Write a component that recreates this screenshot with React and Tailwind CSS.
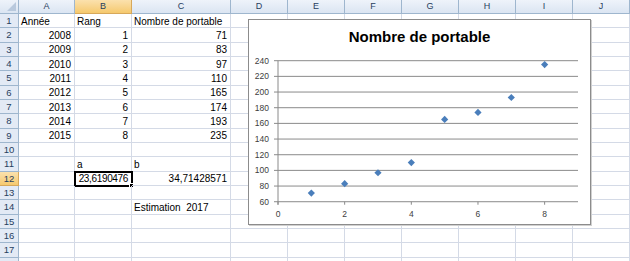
import React from "react";

const COLS = [
  { key: "A", w: "w-[56px]" },
  { key: "B", w: "w-[57px]" },
  { key: "C", w: "w-[99px]" },
  { key: "D", w: "w-[57px]" },
  { key: "E", w: "w-[57px]" },
  { key: "F", w: "w-[57px]" },
  { key: "G", w: "w-[57px]" },
  { key: "H", w: "w-[57px]" },
  { key: "I", w: "w-[57px]" },
  { key: "J", w: "w-[57px]" },
];

const cells = {
  "1A": ["Année", "l"],
  "1B": ["Rang", "l"],
  "1C": ["Nombre de portable", "l"],
  "11B": ["a", "l"],
  "11C": ["b", "l"],
  "12B": ["23,6190476", "r"],
  "12C": ["34,71428571", "r"],
  "14C": ["Estimation  2017", "l"],
};
const data = [
  [2008, 1, 71],
  [2009, 2, 83],
  [2010, 3, 97],
  [2011, 4, 110],
  [2012, 5, 165],
  [2013, 6, 174],
  [2014, 7, 193],
  [2015, 8, 235],
];
data.forEach((d, i) => {
  const r = i + 2;
  cells[r + "A"] = [String(d[0]), "r"];
  cells[r + "B"] = [String(d[1]), "r"];
  cells[r + "C"] = [String(d[2]), "r"];
});

const font = { fontFamily: '"Liberation Sans", Arial, sans-serif' };

function Chart() {
  const x0 = 29;
  const ux = 33.33;
  const yTop = 14.7;
  const step = 15.67;
  const yVal = (v) => yTop + ((240 - v) / 20) * step;
  const grid = [];
  for (let k = 0; k <= 9; k++) grid.push(240 - k * 20);
  const pts = [71, 83, 97, 110, 165, 174, 193, 235];
  return (
    <div className="absolute left-[248px] top-[19px] w-[343px] h-[206px] flex flex-col bg-white border border-[#8c8c8c] shadow-[1px_1px_0_#d0d0d0]">
      <div className="pt-[8px] h-[26px] text-center text-[15px] font-bold text-black leading-[18px]" style={font}>
        Nombre de portable
      </div>
      <svg width="341" height="178" style={font}>
        {grid.map((v) => {
          const y = yVal(v);
          return (
            <g key={v}>
              <line x1={x0 - 4} x2={329} y1={y} y2={y} stroke="#8a8a8a" strokeWidth="1" />
              <text x={20} y={y + 3} fontSize="8.5" fill="#404040" textAnchor="end">
                {v}
              </text>
            </g>
          );
        })}
        <line x1={x0} x2={x0} y1={yTop} y2={yVal(60) + 3} stroke="#8a8a8a" strokeWidth="1" />
        {[0, 2, 4, 6, 8].map((v) => (
          <g key={v}>
            <line x1={x0 + v * ux} x2={x0 + v * ux} y1={yVal(60)} y2={yVal(60) + 3} stroke="#8a8a8a" strokeWidth="1" />
            <text x={x0 + v * ux} y={171} fontSize="8.5" fill="#404040" textAnchor="middle">
              {v}
            </text>
          </g>
        ))}
        {pts.map((v, i) => {
          const cx = x0 + (i + 1) * ux;
          const cy = yVal(v);
          return (
            <polygon
              key={i}
              points={`${cx},${cy - 3.6} ${cx + 3.6},${cy} ${cx},${cy + 3.6} ${cx - 3.6},${cy}`}
              fill="#4a7ebb"
            />
          );
        })}
      </svg>
    </div>
  );
}

export default function App() {
  const rows = [];
  for (let r = 1; r <= 18; r++) rows.push(r);
  return (
    <div className="relative w-[630px] h-[261px] overflow-hidden bg-white" style={font}>
      <div className="flex h-[14px]">
        <div className="w-[19px] h-full flex items-end justify-end pr-[2px] pb-[2px] border-r border-b border-[#9eb6ce] bg-gradient-to-b from-[#eef3fa] to-[#dbe5f2]">
          <div className="w-0 h-0 border-l-[9px] border-l-transparent border-b-[9px] border-b-[#b9c9dd]" />
        </div>
        {COLS.map((c) => (
          <div
            key={c.key}
            className={
              c.w +
              " h-full flex items-center justify-center border-r border-b text-[9px] text-[#27405e] " +
              (c.key === "B"
                ? "bg-gradient-to-b from-[#fbe1ad] to-[#f5c96d] border-[#d7a85a]"
                : "bg-gradient-to-b from-[#eef3fa] to-[#dbe5f2] border-[#9eb6ce]")
            }
          >
            {c.key}
          </div>
        ))}
      </div>
      {rows.map((r) => (
        <div key={r} className="flex h-[14.33px]">
          <div
            className={
              "w-[19px] h-full flex items-center justify-center border-r border-b text-[9.5px] text-[#27405e] pt-[1px] " +
              (r === 12
                ? "bg-gradient-to-b from-[#fbe1ad] to-[#f5c96d] border-[#d7a85a]"
                : "bg-[#e3eaf5] border-[#9eb6ce]")
            }
          >
            {r <= 17 ? r : ""}
          </div>
          {COLS.map((c) => {
            const v = cells[r + c.key];
            const sel = r === 12 && c.key === "B";
            return (
              <div
                key={c.key}
                className={
                  c.w +
                  " relative h-full flex items-center border-r border-b border-[#d4dae6] text-black text-[10px] pt-[1px] whitespace-pre " +
                  (v && v[1] === "r" ? "justify-end pr-[3px]" : "justify-start pl-[2px]") +
                  (sel ? " tracking-[-0.35px] outline-2 outline-black -outline-offset-1" : "")
                }
              >
                {v ? v[0] : ""}
                {sel && (
                  <div className="absolute right-[-3px] bottom-[-3px] w-[5px] h-[5px] bg-black border border-white" />
                )}
              </div>
            );
          })}
        </div>
      ))}
      <Chart />
    </div>
  );
}
